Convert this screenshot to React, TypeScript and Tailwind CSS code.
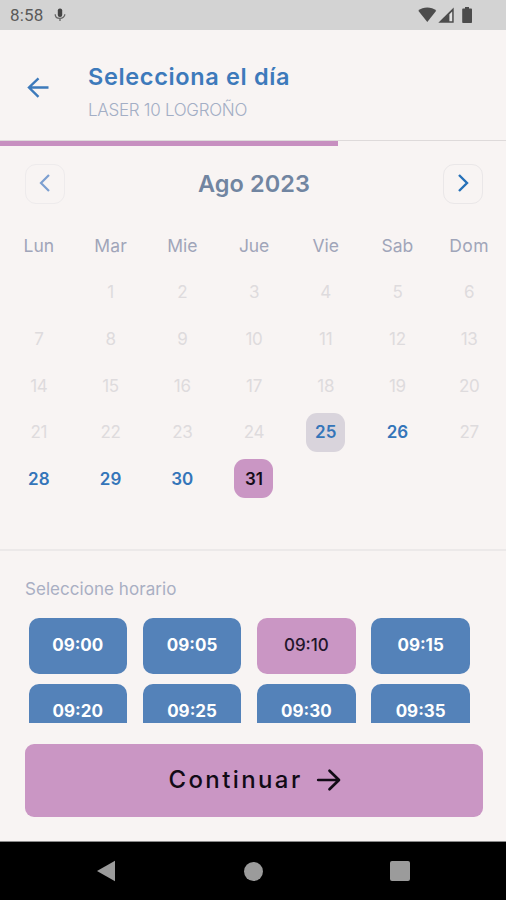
import { useState } from "react";
import clsx from "clsx";

const weekDays = [
  { label: "Lun", tracking: "tracking-[0px]" },
  { label: "Mar", tracking: "tracking-[0.2px]" },
  { label: "Mie", tracking: "tracking-[0px]" },
  { label: "Jue", tracking: "tracking-[-0.2px]" },
  { label: "Vie", tracking: "tracking-[0px]" },
  { label: "Sab", tracking: "tracking-[0px]" },
  { label: "Dom", tracking: "tracking-[0.5px]" },
];

const days = Array.from({ length: 31 }, (_, i) => i + 1);
const availableDays = [25, 26, 28, 29, 30, 31];
const today = 25;

const hours = [
  "09:00",
  "09:05",
  "09:10",
  "09:15",
  "09:20",
  "09:25",
  "09:30",
  "09:35",
];

function StatusBar() {
  return (
    <div className="flex h-[30px] shrink-0 items-center justify-between bg-[#d3d3d3] pr-[33px] pl-[10px] text-[#5a5a5a]">
      <div className="flex items-center">
        <span className="w-[34px] pt-px font-[Roboto] text-[17px] leading-none tracking-[0.2px] whitespace-nowrap">
          8:58
        </span>
        <svg width="12" height="14" viewBox="0 0 12 14" className="ml-[10px]">
          <rect x="3.8" y="0.5" width="4.4" height="8.5" rx="2" fill="#444" />
          <path
            d="M1.2 6.2c0 5.6 9.6 5.6 9.6 0M6 10.5V13"
            fill="none"
            stroke="#666"
            strokeWidth="1.3"
          />
        </svg>
      </div>
      <svg width="55" height="18" viewBox="0 0 55 18" fill="#4c4c4c">
        <path d="M0.3 4.8C5 .4 13.5.4 18.2 4.8L9.3 16z" />
        <path d="M20.3 16.8L35.7 1.5v15.3z" />
        <path d="M31.4 8.2L34.2 5.4v9.9h-2.8z" fill="#e2e2e2" />
        <path d="M47 1h4v1.6h2.2q.8 0 .8.8v12.8q0 .8-.8.8h-8.2q-.8 0-.8-.8V3.4q0-.8.8-.8h2z" />
      </svg>
    </div>
  );
}

function Header() {
  return (
    <>
      <header className="flex h-[110px] shrink-0 items-start">
        <button className="mt-[46px] ml-[27px] w-[61px]" aria-label="Volver">
          <svg width="23" height="23" viewBox="0 0 23 23">
            <path
              d="M21.5 11.5H2M11.5 2.3L2 11.5l9.5 9.3"
              fill="none"
              stroke="#3d7abb"
              strokeWidth="2.4"
            />
          </svg>
        </button>
        <div className="mt-[32px]">
          <h1 className="text-[23.5px] leading-[30px] font-semibold tracking-[0.65px] text-[#3d7abb]">
            Selecciona el día
          </h1>
          <p className="mt-[9px] text-[17px] leading-[18px] font-light tracking-[-0.28px] text-[#a3aec5]">
            LASER 10 LOGROÑO
          </p>
        </div>
      </header>
      <div className="h-[6px] shrink-0 border-t border-[#dedada]">
        <div className="h-[5px] w-[338px] bg-[#c78fc0]" />
      </div>
    </>
  );
}

function MonthNav() {
  return (
    <div className="mt-[18px] flex h-[40px] items-center justify-between pr-[23px] pl-[25px]">
      <button
        className="flex size-[40px] items-center justify-center rounded-[11px] border border-[#eeebec]"
        aria-label="Mes anterior"
      >
        <svg width="12" height="18" viewBox="0 0 12 18" className="mb-[3px]">
          <path
            d="M10 1L2 9l8 8"
            fill="none"
            stroke="#7c9fd0"
            strokeWidth="2.2"
          />
        </svg>
      </button>
      <h2 className="text-[23.5px] leading-[30px] font-semibold tracking-[0.1px] text-[#7185a1]">
        Ago 2023
      </h2>
      <button
        className="flex size-[40px] items-center justify-center rounded-[11px] border border-[#eae7e8]"
        aria-label="Mes siguiente"
      >
        <svg
          width="12"
          height="18"
          viewBox="0 0 12 18"
          className="mr-px mb-[3px]"
        >
          <path
            d="M2 1l8 8-8 8"
            fill="none"
            stroke="#2670b8"
            strokeWidth="2.4"
          />
        </svg>
      </button>
    </div>
  );
}

export default function App() {
  const [selectedDay, setSelectedDay] = useState(31);
  const [selectedHour, setSelectedHour] = useState("09:10");

  return (
    <main className="flex h-[900px] w-[506px] flex-col overflow-hidden bg-[#f8f4f3] font-['Inter','Liberation_Sans',sans-serif]">
      <StatusBar />
      <Header />

      {/* Calendario */}
      <section className="h-[405px] shrink-0 border-b-2 border-[#ece9e9]">
        <MonthNav />
        <div className="mt-[32px] ml-[3px] grid w-[502px] grid-cols-7 text-center text-[17.5px] leading-[20px] text-[#a0a5b9]">
          {weekDays.map(({ label, tracking }) => (
            <span key={label} className={tracking}>
              {label}
            </span>
          ))}
        </div>
        <div className="mt-[12.5px] ml-[3px] grid w-[502px] auto-rows-[46.75px] grid-cols-7 place-items-center text-[17px]">
          {days.map((day) => (
            <button
              key={day}
              disabled={!availableDays.includes(day)}
              onClick={() => setSelectedDay(day)}
              className={clsx(
                "size-[39px] rounded-[11px] pt-[2px]",
                day === 1 && "col-start-2",
                !availableDays.includes(day) &&
                  "tracking-[-0.3px] text-[#dedbdd]",
                availableDays.includes(day) && "font-semibold",
                day === selectedDay && "bg-[#ca96c4] text-[#160d19]",
                day !== selectedDay &&
                  availableDays.includes(day) &&
                  "text-[#3475b9]",
                day === today && day !== selectedDay && "bg-[#d9d4dc]"
              )}
            >
              {day}
            </button>
          ))}
        </div>
      </section>

      {/* Horarios */}
      <section className="h-[172px] shrink-0 overflow-hidden pl-[25px]">
        <h3 className="mt-[28px] text-[17px] leading-[20px] tracking-[0.05px] text-[#a9afc3]">
          Seleccione horario
        </h3>
        <div className="mt-[19px] ml-[3.5px] grid grid-cols-[repeat(4,98.5px)] gap-x-[15.8px] gap-y-[10px]">
          {hours.map((hour) => (
            <button
              key={hour}
              onClick={() => setSelectedHour(hour)}
              className={clsx(
                "h-[55.5px] rounded-[10px] text-[17px]",
                hour === selectedHour
                  ? "bg-[#ca96c4] font-medium text-[#22152a]"
                  : "bg-[#5482b9] font-bold text-white"
              )}
            >
              {hour}
            </button>
          ))}
        </div>
      </section>

      <div className="flex grow flex-col pt-[20.5px] pr-[23px] pl-[25px]">
        <button className="flex h-[73.5px] items-center justify-center rounded-[9px] bg-[#ca96c4] pl-[2px] text-[#120b16]">
          <span className="text-[24px] font-medium tracking-[2.4px]">
            Continuar
          </span>
          <svg width="26" height="24" viewBox="0 0 26 24" className="ml-[13px]">
            <path
              d="M2.2 12h20.5M13.5 2.8l9.5 9.2-9.5 9.2"
              fill="none"
              stroke="#120b16"
              strokeWidth="2.7"
              strokeLinecap="round"
              strokeLinejoin="round"
            />
          </svg>
        </button>
      </div>

      {/* Barra de Android */}
      <nav className="flex h-[59px] shrink-0 items-center justify-between border-t border-[#8a8a8a] bg-black px-[96px]">
        <svg width="20" height="22" viewBox="0 0 20 22">
          <path d="M1 11L19 .8v20.4z" fill="#9b9b9b" />
        </svg>
        <span className="size-[19px] rounded-full bg-[#9b9b9b]" />
        <span className="size-[20px] rounded-[2px] bg-[#9b9b9b]" />
      </nav>
    </main>
  );
}
